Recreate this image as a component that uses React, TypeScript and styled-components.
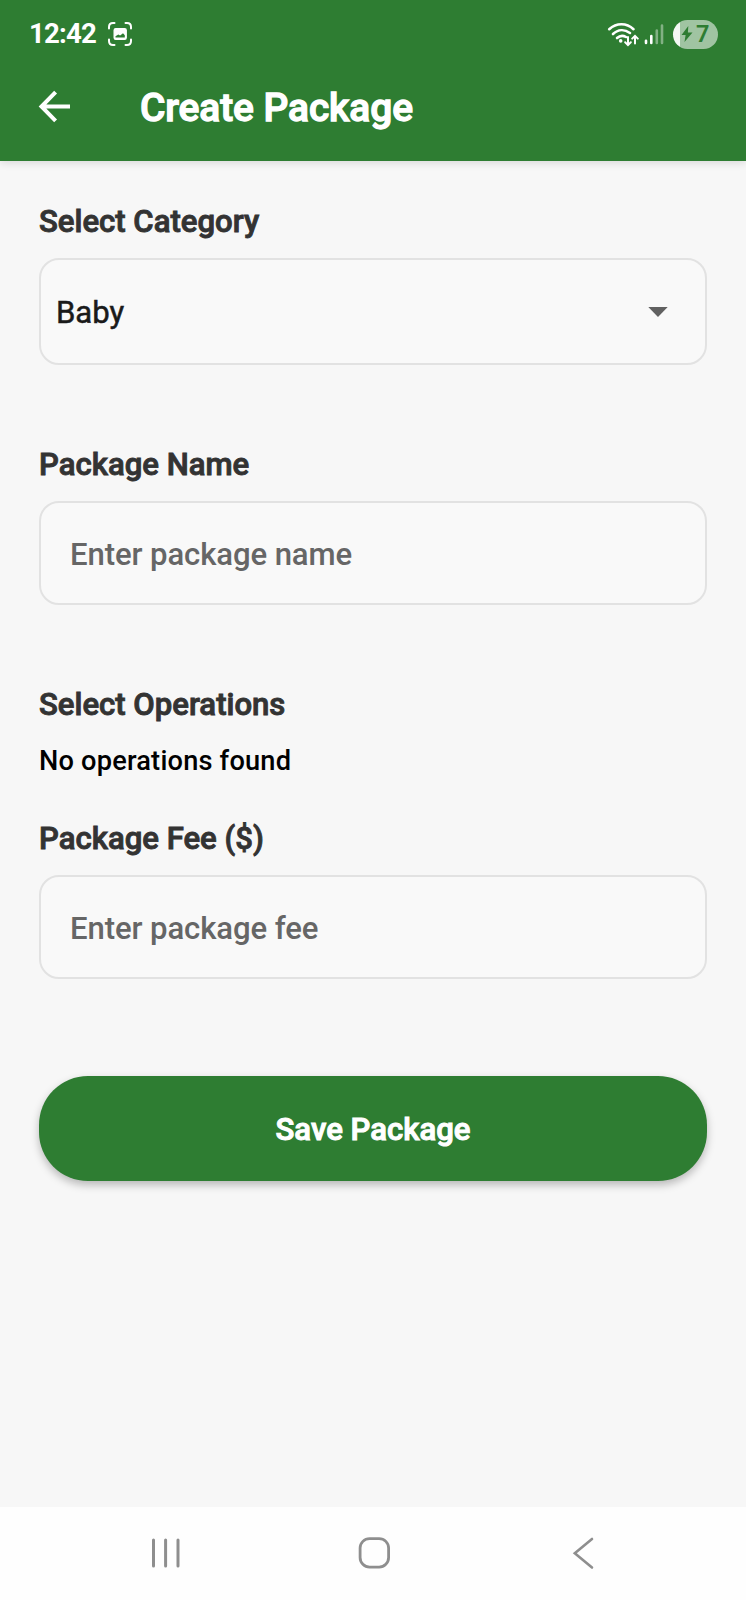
import React from 'react';
import styled, { createGlobalStyle } from 'styled-components';

const green = '#2e7d32';

const GlobalStyle = createGlobalStyle`
  * { box-sizing: border-box; }
  body { margin: 0; background: #f7f7f7; font-family: Roboto, "Noto Sans", sans-serif; }
`;

const Screen = styled.div`
  width: 746px;
  height: 1600px;
  display: flex;
  flex-direction: column;
  background: #f7f7f7;
  overflow: hidden;
`;

const Header = styled.header`
  height: 161px;
  flex: none;
  background: ${green};
  color: #fff;
  box-shadow: 0 2px 8px rgba(0, 0, 0, 0.12);
`;

const StatusBar = styled.div`
  height: 68px;
  padding: 0 28px 0 29px;
  display: flex;
  align-items: center;
`;

const Clock = styled.span`
  font-size: 27.6px;
  font-weight: 700;
  line-height: 32px;
  letter-spacing: -0.8px;
  margin-right: 11px;
`;

const StatusIcons = styled.div`
  margin-left: auto;
  display: flex;
  align-items: center;
`;

const Signal = styled.span`
  display: flex;
  margin-left: 5px;
`;

const Battery = styled.div`
  width: 45px;
  height: 29px;
  margin-left: 9px;
  border-radius: 15px;
  background: linear-gradient(to right, #f4f8f4 7px, #a0c4a2 7px);
  color: ${green};
  display: flex;
  align-items: center;
  padding-left: 8px;
  font-size: 23.5px;
  font-weight: 600;
  line-height: 29px;
  gap: 3px;
`;

const TitleBar = styled.div`
  height: 78px;
  padding-left: 33px;
  display: flex;
  align-items: center;
`;

const BackButton = styled.button`
  width: 42px;
  height: 42px;
  padding: 0;
  border: 0;
  background: none;
  margin-right: 65px;
`;

const Title = styled.h1`
  margin: 2px 0 0;
  font-size: 38.9px;
  line-height: 46px;
  font-weight: 500;
  letter-spacing: -0.08px;
  -webkit-text-stroke: 1.3px currentColor;
`;

const Form = styled.main`
  flex: 1;
  padding: 41px 39px 0;
  display: flex;
  flex-direction: column;
`;

const Group = styled.section<{ $after: number }>`
  display: flex;
  flex-direction: column;
  margin-bottom: ${(p) => p.$after}px;
`;

const Label = styled.label`
  font-size: 31.1px;
  line-height: 40px;
  font-weight: 500;
  color: #333;
  -webkit-text-stroke: 0.9px currentColor;
`;

const Picker = styled.div`
  height: 107px;
  margin-top: 16px;
  padding: 0 37px 0 15px;
  border: 2px solid #e2e2e2;
  border-radius: 20px;
  background: #f9f9f9;
  display: flex;
  align-items: center;
  justify-content: space-between;
`;

const PickerValue = styled.span`
  padding-top: 2px;
  font-size: 31.1px;
  line-height: 40px;
  color: #1a1a1a;
  -webkit-text-stroke: 0.5px currentColor;
`;

const Field = styled.input`
  height: 104px;
  margin-top: 16px;
  padding: 2px 29px 0;
  border: 2px solid #e2e2e2;
  border-radius: 20px;
  background: #f9f9f9;
  font-family: inherit;
  font-size: 31.1px;
  font-weight: 500;
  letter-spacing: -0.1px;
  outline: none;
  &::placeholder { color: #666; opacity: 1; }
`;

const EmptyNote = styled.p`
  margin: 20px 0 0;
  font-size: 27.2px;
  line-height: 32px;
  font-weight: 500;
  letter-spacing: 0.2px;
  color: #000;
`;

const SaveButton = styled.button`
  height: 105px;
  flex: none;
  padding: 1px 0 0;
  border: 0;
  border-radius: 49px;
  background: ${green};
  color: #fff;
  font-family: inherit;
  font-size: 31.1px;
  font-weight: 500;
  -webkit-text-stroke: 1px currentColor;
  box-shadow: 0 4px 9px rgba(0, 0, 0, 0.26);
`;

const NavBar = styled.nav`
  height: 93px;
  flex: none;
  background: #fefefe;
  padding: 0 151px 0 150px;
  display: flex;
  align-items: center;
  justify-content: space-between;
`;

const CaptureIcon = () => (
  <svg width="26" height="26" viewBox="0 0 26 26" fill="none" stroke="#fff" strokeWidth="2" strokeLinecap="round">
    <path d="M2 7.500V6q0-4 4-4h1.500M18.500 2H20q4 0 4 4v1.500M24 18.500V20q0 4-4 4h-1.500M7.500 24H6q-4 0-4-4v-1.500" />
    <rect x="7.200" y="7.800" width="12" height="10.400" rx="1.500" fill="#fff" strokeWidth="1.400" />
    <path d="M8.500 16.400v-1.200l2.800-1.800 1.800 1.200 2.900-2.400 1.800 2.100v2.100z" fill={green} stroke="none" />
  </svg>
);

const WifiIcon = () => (
  <svg width="32" height="27" viewBox="0 0 32 27" fill="none" stroke="#fff" strokeWidth="2.600" strokeLinecap="round">
    <path d="M2.200 8.200C9.500 1.600 19.500 1.600 26.500 8.200M6 13c5-4.700 11.500-5 17-1M10 17c2.800-2.500 6-2.800 9-1" />
    <circle cx="13.700" cy="19.900" r="1.800" fill="#fff" stroke="none" />
    <path d="M21 16v7.500M18.200 21.300l2.800 2.800 2.800-2.800M28 22.500V15.200M25.200 17.600l2.800-2.800 2.800 2.800" strokeWidth="2" />
  </svg>
);

const SignalIcon = () => (
  <svg width="20" height="22" viewBox="0 0 20 22" strokeLinecap="round" strokeWidth="2.600">
    <path d="M2 17.800V20M7.300 13V20" stroke="#fff" />
    <path d="M12.800 7.500V20M18 2.500V20" stroke="#82b184" />
  </svg>
);

export default function App() {
  return (
    <Screen>
      <GlobalStyle />
      <Header>
        <StatusBar>
          <Clock>12:42</Clock>
          <CaptureIcon />
          <StatusIcons>
            <WifiIcon />
            <Signal>
              <SignalIcon />
            </Signal>
            <Battery>
              <svg width="12" height="16" viewBox="0 0 11 16" fill={green}>
                <path d="M6.800 0 0 9h4.100L3 16 11 6.600H6.400z" />
              </svg>
              7
            </Battery>
          </StatusIcons>
        </StatusBar>
        <TitleBar>
          <BackButton aria-label="Back">
            <svg width="42" height="42" viewBox="0 0 42 42" fill="none" stroke="#fff" strokeWidth="4">
              <path d="M37 20.500H8.500M22.600 6.200 8.500 20.500 22.600 34.800" />
            </svg>
          </BackButton>
          <Title>Create Package</Title>
        </TitleBar>
      </Header>
      <Form>
        <Group $after={80}>
          <Label>Select Category</Label>
          <Picker>
            <PickerValue>Baby</PickerValue>
            <svg width="20" height="10" viewBox="0 0 20 10" fill="#616161">
              <path d="M.3 0h19.400L10 10z" />
            </svg>
          </Picker>
        </Group>
        <Group $after={80}>
          <Label>Package Name</Label>
          <Field placeholder="Enter package name" />
        </Group>
        <Group $after={42}>
          <Label>Select Operations</Label>
          <EmptyNote>No operations found</EmptyNote>
        </Group>
        <Group $after={97}>
          <Label>Package Fee ($)</Label>
          <Field placeholder="Enter package fee" />
        </Group>
        <SaveButton>Save Package</SaveButton>
      </Form>
      <NavBar>
        <svg width="32" height="34" viewBox="0 0 32 34" stroke="#8e8e8e" strokeWidth="3" strokeLinecap="round">
          <path d="M3.500 3V29M15.600 3V29M28 3V29" />
        </svg>
        <svg width="34" height="34" viewBox="0 0 34 34" fill="none" stroke="#8e8e8e" strokeWidth="2.800" overflow="visible">
          <rect x="0.100" y="1.600" width="28.500" height="28.500" rx="9.500" />
        </svg>
        <svg width="24" height="34" viewBox="0 0 24 34" fill="none" stroke="#8e8e8e" strokeWidth="2.600" strokeLinecap="round">
          <path d="M21 2 3.800 16.200 21 30.500" />
        </svg>
      </NavBar>
    </Screen>
  );
}
